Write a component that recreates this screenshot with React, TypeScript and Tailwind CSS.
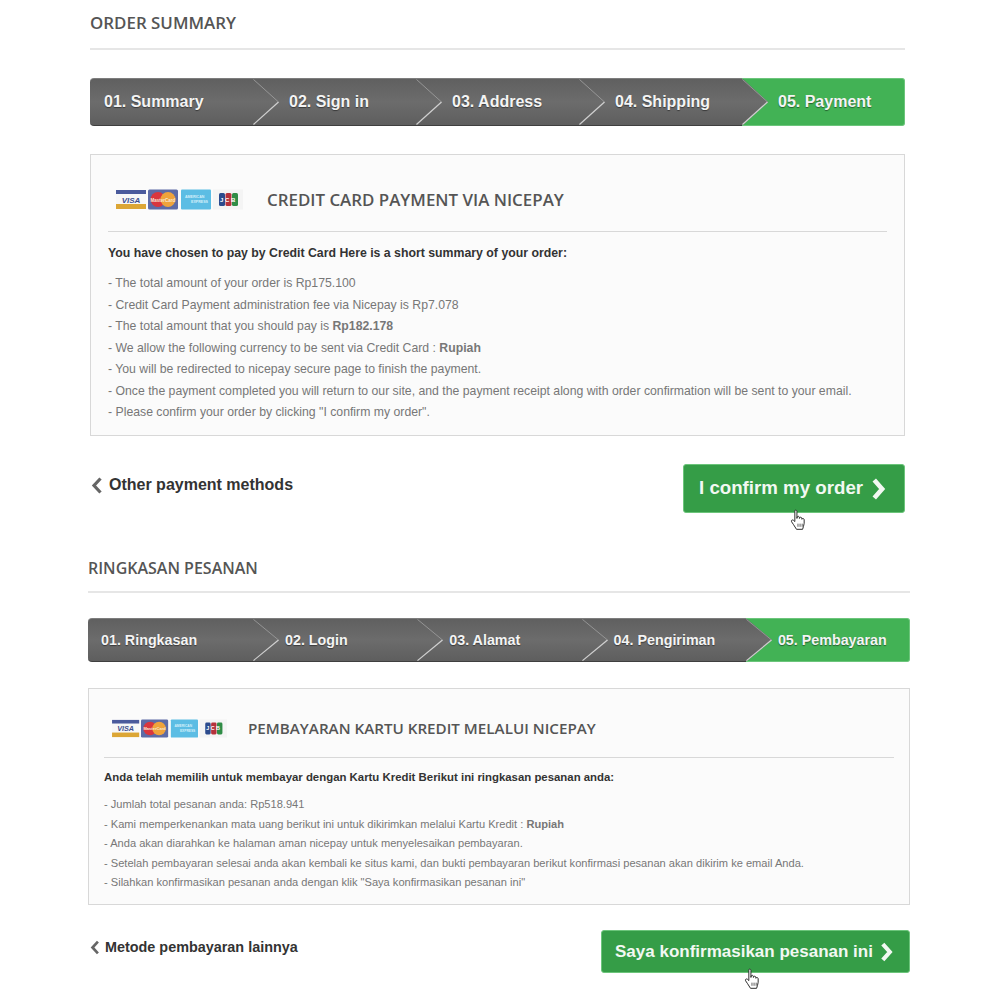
type Size = {
  title: string;
  header: string;
  bar: string;
  cell: string;
  cellFirst: string;
  stepText: string;
  panel: string;
  panelHead: string;
  logos: string;
  panelTitle: string;
  lead: string;
  list: string;
  foot: string;
  back: string;
  backIcon: string;
  button: string;
  buttonText: string;
  chevron: string;
  cursor: string;
};

const large: Size = {
  title: "text-[16.9px] leading-[22px]",
  header: "h-[50px] pt-[12px]",
  bar: "mt-[28px] h-[48px]",
  cell: "pl-[36px] w-[163px]",
  cellFirst: "pl-[14px] w-[163px]",
  stepText: "text-[16px]",
  panel: "mt-[28px] h-[282px] px-[17px]",
  panelHead: "h-[77px] pt-[13px] pl-[8px] gap-[24px]",
  logos: "w-[127px] h-[21px]",
  panelTitle: "text-[16.9px]",
  lead: "mt-[12px] text-[12.3px] leading-[18px]",
  list: "mt-[11px] text-[12.25px] leading-[21.5px]",
  foot: "mt-[28px] h-[49px]",
  back: "text-[16px] pt-[9px] gap-[6px] pl-[1px]",
  backIcon: "w-[12px] h-[17px]",
  button: "h-[49px] w-[222px] pl-[15px] gap-[8px]",
  buttonText: "text-[18.7px]",
  chevron: "w-[17px] h-[22px]",
  cursor: "left-[106px] top-[44px]",
};

const small: Size = {
  title: "text-[16px] leading-[22px]",
  header: "mt-[36px] h-[44px] pt-[8px]",
  bar: "mt-[25px] h-[44px]",
  cell: "pl-[32px] pt-[1px] w-[164.3px]",
  cellFirst: "pl-[13px] pt-[1px] w-[165px]",
  stepText: "text-[14.3px]",
  panel: "mt-[26px] h-[217px] px-[15px]",
  panelHead: "h-[69px] pt-[11px] pl-[8px] gap-[21px]",
  logos: "w-[115px] h-[19px]",
  panelTitle: "text-[15.2px]",
  lead: "mt-[11px] text-[11.4px] leading-[17px]",
  list: "mt-[9px] text-[11.1px] leading-[19.6px]",
  foot: "mt-[25px] h-[43px]",
  back: "text-[14.4px] pt-[7px] gap-[5px] pl-[2px]",
  backIcon: "w-[10px] h-[15px]",
  button: "h-[43px] w-[309px] pl-[13px] gap-[7px]",
  buttonText: "text-[17px]",
  chevron: "w-[15px] h-[20px]",
  cursor: "left-[142px] top-[37px]",
};

function CardLogos({ className }: { className: string }) {
  return (
    <svg viewBox="0 0 127 21" className={className}>
      <rect x="0" y="1" width="30" height="19" fill="#f7f7f7" />
      <rect x="0" y="1" width="30" height="4" fill="#4a5a9c" />
      <rect x="0" y="15" width="30" height="5" fill="#dca635" />
      <text x="15" y="13.5" textAnchor="middle" fontSize="8" fontWeight="700" fontStyle="italic" fill="#3d4f8f" fontFamily="Liberation Sans">VISA</text>
      <rect x="32" y="0.5" width="30" height="20" rx="1.5" fill="#5d6ba6" />
      <circle cx="42" cy="10.5" r="7.5" fill="#d9363e" />
      <circle cx="52" cy="10.5" r="7.5" fill="#efa33b" />
      <text x="47" y="12.5" textAnchor="middle" fontSize="4.5" fontWeight="700" fill="#f7e8d8" fontFamily="Liberation Sans">MasterCard</text>
      <rect x="65" y="0.5" width="30" height="20" rx="1" fill="#5cbde4" />
      <text x="69" y="9" fontSize="3.6" fontWeight="700" fill="#d4f0fa" fontFamily="Liberation Sans">AMERICAN</text>
      <text x="75" y="14" fontSize="3.6" fontWeight="700" fill="#d4f0fa" fontFamily="Liberation Sans">EXPRESS</text>
      <rect x="97" y="0.5" width="30" height="20" fill="#f4f4f4" />
      <rect x="103" y="4" width="6" height="13" rx="1.5" fill="#2b4a8c" />
      <rect x="109.5" y="4" width="6" height="13" rx="1.5" fill="#b5313a" />
      <rect x="116" y="4" width="6" height="13" rx="1.5" fill="#2f8c46" />
      <text x="112.5" y="12.5" textAnchor="middle" fontSize="6" fontWeight="700" letterSpacing="1.6" fill="#fff" fontFamily="Liberation Sans">JCB</text>
    </svg>
  );
}

function HandCursor({ className }: { className: string }) {
  return (
    <svg viewBox="0 0 15 21" className={`absolute h-[22px] w-[17px] ${className}`}>
      <path
        d="M4 1.5c.9-.8 2-.3 2 1V9l.3-1.5c.7-.9 1.9-.5 2 .5l.1 1 .3-.8c.8-.7 1.8-.3 1.9.6l.1 1 .3-.5c.8-.6 1.8-.1 1.9.9.2 2.4 0 4.6-.6 6.3l-.9 2.9H5.6L2.8 15 .9 12.2c-.6-1.2.6-2.3 1.7-1.5L4 12V2.5z"
        fill="#fff"
        stroke="#222"
        strokeWidth="0.9"
        strokeLinejoin="round"
      />
      <path d="M7 14v3M9 14v3M11 14v3" stroke="#222" strokeWidth="0.7" />
    </svg>
  );
}

function Arrow({ id }: { id: string }) {
  return (
    <svg
      viewBox="0 0 26 48"
      preserveAspectRatio="none"
      className="absolute left-full top-0 z-10 h-full w-[26px]"
    >
      <defs>
        <linearGradient id={id} x1="0" y1="0" x2="0" y2="1">
          <stop offset="0" stopColor="#606060" />
          <stop offset="0.5" stopColor="#6c6c6c" />
          <stop offset="1" stopColor="#5e5e5e" />
        </linearGradient>
      </defs>
      <path d="M0 0H1L26 24L1 48H0Z" fill={`url(#${id})`} />
      <path d="M0.5 0.5L25.5 24" fill="none" stroke="#989898" strokeWidth="1" />
      <path d="M25.5 24L0.5 47.5" fill="none" stroke="#d0d0d0" strokeWidth="1.2" />
    </svg>
  );
}

function Stepper({ steps, size, prefix }: { steps: string[]; size: Size; prefix: string }) {
  return (
    <div className={`flex ${size.bar}`}>
      {steps.map((step, i) => {
        const last = i === steps.length - 1;
        const tone = last
          ? "flex-1 bg-[#42b255] border-y border-r border-[#6cc57b] rounded-r-[3px]"
          : "bg-gradient-to-b from-[#606060] via-[#6c6c6c] to-[#5e5e5e] border-y border-t-[#7d7d7d] border-b-[#3f3f3f]";
        return (
          <div
            key={step}
            className={`relative flex items-center ${tone} ${i === 0 ? `rounded-l-[4px] ${size.cellFirst}` : size.cell}`}
          >
            <span
              className={`font-bold text-[#f4f4f4] [text-shadow:0_1px_1px_rgba(0,0,0,0.45)] ${size.stepText}`}
            >
              {step}
            </span>
            {!last && <Arrow id={`${prefix}-${i}`} />}
          </div>
        );
      })}
    </div>
  );
}

function Section({
  size,
  title,
  steps,
  prefix,
  panelTitle,
  lead,
  items,
  back,
  confirm,
  frame,
}: {
  size: Size;
  title: string;
  steps: string[];
  prefix: string;
  panelTitle: string;
  lead: string;
  items: React.ReactNode[];
  back: string;
  confirm: string;
  frame: string;
}) {
  return (
    <section className={frame}>
      <div className={`border-b-2 border-[#e6e6e6] ${size.header}`}>
        <h2 className={`font-['Open_Sans',sans-serif] font-semibold text-[#555] ${size.title}`}>{title}</h2>
      </div>

      <Stepper steps={steps} size={size} prefix={prefix} />

      <div className={`border border-[#d8d8d8] bg-[#fbfbfb] ${size.panel}`}>
        <div className={`flex items-center border-b border-[#d8d8d8] ${size.panelHead}`}>
          <CardLogos className={size.logos} />
          <h3 className={`font-['Open_Sans',sans-serif] font-semibold text-[#555] ${size.panelTitle}`}>{panelTitle}</h3>
        </div>
        <p className={`font-bold text-[#333] ${size.lead}`}>{lead}</p>
        <ul className={`text-[#777] ${size.list}`}>
          {items.map((item, i) => (
            <li key={i}>- {item}</li>
          ))}
        </ul>
      </div>

      <div className={`flex items-start justify-between ${size.foot}`}>
        <a className={`flex items-center font-bold text-[#333] ${size.back}`}>
          <svg viewBox="0 0 12 17" className={size.backIcon}>
            <path d="M9.5 1.5L3 8.5l6.5 7" fill="none" stroke="#666" strokeWidth="3.2" />
          </svg>
          {back}
        </a>
        <button
          className={`relative flex items-center rounded-[3px] border border-[#6cc57b] bg-[#359d47] font-bold text-[#f2f8f2] ${size.button}`}
        >
          <span className={size.buttonText}>{confirm}</span>
          <svg viewBox="0 0 16 21" className={size.chevron}>
            <path d="M3 2l7.5 8.5L3 19" fill="none" stroke="#f2f8f2" strokeWidth="4.4" />
          </svg>
          <HandCursor className={size.cursor} />
        </button>
      </div>
    </section>
  );
}

export default function App() {
  return (
    <div className="h-[1000px] w-[1000px] overflow-hidden bg-white font-['Liberation_Sans',Arial,sans-serif]">
      <Section
        frame="ml-[90px] w-[815px]"
        size={large}
        prefix="en"
        title="ORDER SUMMARY"
        steps={["01. Summary", "02. Sign in", "03. Address", "04. Shipping", "05. Payment"]}
        panelTitle="CREDIT CARD PAYMENT VIA NICEPAY"
        lead="You have chosen to pay by Credit Card Here is a short summary of your order:"
        items={[
          "The total amount of your order is Rp175.100",
          "Credit Card Payment administration fee via Nicepay is Rp7.078",
          <>The total amount that you should pay is <b>Rp182.178</b></>,
          <>We allow the following currency to be sent via Credit Card : <b>Rupiah</b></>,
          "You will be redirected to nicepay secure page to finish the payment.",
          "Once the payment completed you will return to our site, and the payment receipt along with order confirmation will be sent to your email.",
          'Please confirm your order by clicking "I confirm my order".',
        ]}
        back="Other payment methods"
        confirm="I confirm my order"
      />
      <Section
        frame="ml-[88px] w-[822px]"
        size={small}
        prefix="id"
        title="RINGKASAN PESANAN"
        steps={["01. Ringkasan", "02. Login", "03. Alamat", "04. Pengiriman", "05. Pembayaran"]}
        panelTitle="PEMBAYARAN KARTU KREDIT MELALUI NICEPAY"
        lead="Anda telah memilih untuk membayar dengan Kartu Kredit Berikut ini ringkasan pesanan anda:"
        items={[
          "Jumlah total pesanan anda: Rp518.941",
          <>Kami memperkenankan mata uang berikut ini untuk dikirimkan melalui Kartu Kredit : <b>Rupiah</b></>,
          "Anda akan diarahkan ke halaman aman nicepay untuk menyelesaikan pembayaran.",
          "Setelah pembayaran selesai anda akan kembali ke situs kami, dan bukti pembayaran berikut konfirmasi pesanan akan dikirim ke email Anda.",
          'Silahkan konfirmasikan pesanan anda dengan klik "Saya konfirmasikan pesanan ini"',
        ]}
        back="Metode pembayaran lainnya"
        confirm="Saya konfirmasikan pesanan ini"
      />
    </div>
  );
}
